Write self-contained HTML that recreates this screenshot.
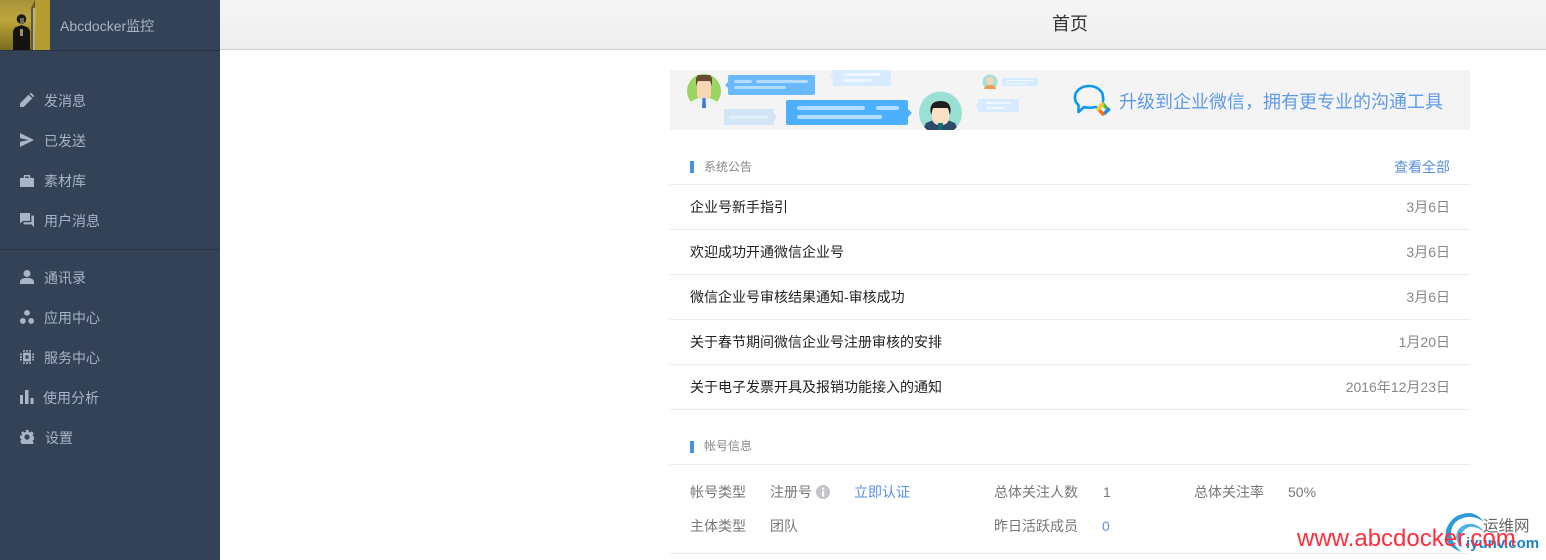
<!DOCTYPE html>
<html lang="zh"><head><meta charset="utf-8"><title>首页</title>
<style>
html,body{margin:0;padding:0;background:#fff}
body{width:1546px;height:560px;overflow:hidden;position:relative;font-family:"Liberation Sans","Noto Sans CJK SC",sans-serif;font-size:14px;color:#777}
.a{position:absolute;white-space:nowrap;line-height:20px}
.side{position:absolute;left:0;top:0;width:220px;height:560px;background:#344257}
.hr{position:absolute;left:0;width:220px;height:1px;background:#273242}
.m{position:absolute;white-space:nowrap;line-height:20px;color:#a6b4c9;left:44px}
.ic{position:absolute;left:20px;width:14px;height:14px;fill:#a9b5c7}
.top{position:absolute;left:220px;top:0;width:1326px;height:49px;background:linear-gradient(#f5f5f5,#eeeeee);border-bottom:1px solid #cfcfcf}
.l{position:absolute;left:670px;width:800px;height:1px;background:#ebebeb}
.t{color:#222}.d{color:#888}.b{color:#5a8fe0}
.bar{position:absolute;left:690px;width:4px;height:12px;background:#4a90e2}
</style></head><body>
<div class="side">
<svg style="position:absolute;left:0;top:0" width="50" height="50" viewBox="0 0 50 50">
<defs><linearGradient id="w" x1="0" y1="0" x2="0" y2="1"><stop offset="0" stop-color="#a8923a"/><stop offset=".4" stop-color="#bda63c"/><stop offset="1" stop-color="#7a6a1e"/></linearGradient></defs>
<rect width="50" height="50" fill="url(#w)"/>
<path d="M31 8 35 0V50H31z" fill="#6a5a20"/><rect x="33" y="8" width="2.500" height="42" fill="#b5ae8e"/>
<rect x="36" y="0" width="14" height="50" fill="#b59c30"/>
<circle cx="21.500" cy="19" r="4.800" fill="#1b1a14"/><rect x="20" y="18" width="4" height="6" fill="#6f6a55"/>
<path d="M13 50V31L15 27.500 21.500 25 28 27.500 30 31V50z" fill="#14130f"/><rect x="20" y="29" width="3" height="7" fill="#9c8f6a"/>
</svg>
<div class="a" style="left:60px;top:16px;color:#a6b4c9">Abcdocker监控</div>
<div class="hr" style="top:50px"></div>
<div class="hr" style="top:249px"></div>

<svg class="ic" style="top:93px" viewBox="0 0 16 16"><path d="M0 16v-4.200L9.800 2l4.200 4.200L4.200 16zM11 .8 12 0q.5-.3 1 0l3 3q.3.500 0 1l-1 1z"/></svg>
<div class="m" style="top:91px">发消息</div>
<svg class="ic" style="top:133px" viewBox="0 0 16 16"><path d="M0 0 16 8 0 16V10L10 8 0 6z"/></svg>
<div class="m" style="top:131px">已发送</div>
<svg class="ic" style="top:175px;height:12px" viewBox="0 0 14 12"><path fill-rule="evenodd" d="M0 3H3.500L4 0H10L10.500 3H14V12H0zM5.200 3H8.800V1.500H5.200z"/></svg>
<div class="m" style="top:171px">素材库</div>
<svg class="ic" style="top:213px" viewBox="0 0 16 16"><path d="M0 0H11.500V9H3.500L0 12zM13 3H16V16L13 13H4V10.500H13z"/></svg>
<div class="m" style="top:211px">用户消息</div>

<svg class="ic" style="top:270px" viewBox="0 0 16 16"><circle cx="8" cy="4" r="4"/><path d="M0 16v-3q1-4 8-4t8 4v3z"/></svg>
<div class="m" style="top:268px;left:44px">通讯录</div>
<svg class="ic" style="top:310px" viewBox="0 0 16 16"><circle cx="8" cy="3.300" r="3.300"/><circle cx="3.300" cy="12.500" r="3.300"/><circle cx="12.700" cy="12.500" r="3.300"/></svg>
<div class="m" style="top:308px">应用中心</div>
<svg class="ic" style="top:350px" viewBox="0 0 16 16"><path d="M3.500 3H12.500V13H3.500zM6.200 6V10H9.800V6zM3.500 0h2v2h-2zM7 0h2v2H7zM10.500 0h2v2h-2zM3.500 14h2v2h-2zM7 14h2v2H7zM10.500 14h2v2h-2zM0 4h2v2H0zM0 7h2v2H0zM0 10h2v2H0zM14 4h2v2h-2zM14 7h2v2h-2zM14 10h2v2h-2z" fill-rule="evenodd"/></svg>
<div class="m" style="top:348px">服务中心</div>
<svg class="ic" style="top:390px" viewBox="0 0 14 14"><path d="M0 5H3V14H0zM5 0H8.500V14H5zM10.500 8H13.500V14H10.500z"/></svg>
<div class="m" style="top:388px;left:43px">使用分析</div>
<svg class="ic" style="top:430px" viewBox="0 0 16 16"><path fill-rule="evenodd" d="M6.300 0h3.400l.4 2.300 1.300.6 2-1.300 2.300 2.400-1.300 2 .5 1.200 2.100.4v3.400l-2.100.4-.5 1.200 1.300 2-2.300 2.400-2-1.300-1.300.6-.4 2.300H6.300l-.4-2.300-1.300-.6-2 1.300L.3 13l1.300-2-.5-1.200L-.1 9.400V6.600l2.200-.4.5-1.200-1.300-2L3.600 1.600l2 1.300 1.300-.6zM8 5a3 3 0 1 0 0 6a3 3 0 0 0 0-6z"/></svg>
<div class="m" style="top:428px;left:45px">设置</div>
</div>

<div class="top"></div>
<div class="a" style="left:1052px;top:13px;font-size:18px;line-height:22px;color:#333">首页</div>

<!-- banner -->
<svg style="position:absolute;left:670px;top:70px" width="800" height="60" viewBox="0 0 800 60">
<defs><clipPath id="c1"><rect width="800" height="60"/></clipPath><clipPath id="c2"><circle cx="34" cy="21" r="17"/></clipPath><clipPath id="c3"><circle cx="270.500" cy="43" r="21.500"/></clipPath></defs>
<rect width="800" height="60" fill="#f4f4f5"/>
<circle cx="34" cy="21" r="17" fill="#9dd562"/>
<g clip-path="url(#c2)">
<path d="M18 40V33L28 28H40L50 33V40z" fill="#eef3f4"/>
<rect x="27" y="8" width="14" height="21" rx="5" fill="#fbd6b4"/><path d="M26 16V8L28 5H40L42 8V16L40 11H28z" fill="#6b4a33"/>
<path d="M32.500 28H35.500L36 38H32z" fill="#3a76d8"/>
</g>
<rect x="58" y="5" width="87" height="20" rx="2" fill="#68b9fe"/><path d="M58 12l-3 3 3 3z" fill="#68b9fe"/>
<rect x="64" y="10" width="18" height="3" rx="1.500" fill="#b4dcfe"/><rect x="86" y="10" width="52" height="3" rx="1.500" fill="#b4dcfe"/><rect x="64" y="16" width="52" height="3" rx="1.500" fill="#b4dcfe"/>
<rect x="163" y="0" width="58" height="16" fill="#d6ebff"/><path d="M163 2l-3 3 3 3z" fill="#d6ebff"/>
<rect x="174" y="3" width="36" height="3" rx="1.500" fill="#eef7ff"/><rect x="174" y="9" width="28" height="3" rx="1.500" fill="#eef7ff"/>
<rect x="54" y="39" width="50" height="16" fill="#d3e6f7"/><path d="M104 43l2.500 4-2.500 4z" fill="#d3e6f7"/>
<rect x="59" y="46" width="39" height="2.500" rx="1.200" fill="#e6f1fb"/>
<rect x="116" y="30" width="122" height="25" rx="2" fill="#4db0ff"/><path d="M238 39l4 4-4 4z" fill="#4db0ff"/>
<rect x="127" y="36" width="68" height="4" rx="2" fill="#b4dcfe"/><rect x="206" y="36" width="23" height="4" rx="2" fill="#b4dcfe"/><rect x="127" y="45" width="85" height="4" rx="2" fill="#b4dcfe"/>
<g clip-path="url(#c1)"><circle cx="270.500" cy="43" r="21.500" fill="#9be0d5"/>
<g clip-path="url(#c3)">
<path d="M252 62L256 53 266 49H275L285 53 289 62z" fill="#2c4a6b"/>
<rect x="262" y="36" width="17" height="19" rx="7" fill="#fce0c4"/><path d="M261 45Q258 31 270.500 31Q283 31 280 45L278 38H263z" fill="#1d1d1d"/>
<path d="M268 53H273L272 62H269z" fill="#0e6d7d"/>
</g></g>
<circle cx="320" cy="12" r="7.500" fill="#a4e2d8"/><rect x="316.500" y="7" width="7" height="8" rx="3" fill="#f4d7b9"/><path d="M314 19q1-4 6-4t6 4z" fill="#ee9a52"/>
<rect x="332" y="8" width="36" height="8" fill="#d6ebff"/><rect x="336" y="10" width="28" height="1.200" fill="#eef7ff"/><rect x="336" y="13" width="20" height="1.200" fill="#eef7ff"/>
<rect x="308" y="29" width="41" height="13" fill="#d6ebff"/><path d="M308 33l-3 3 3 3z" fill="#d6ebff"/><rect x="316" y="32" width="25" height="2" rx="1" fill="#eef7ff"/><rect x="316" y="37" width="19" height="2" rx="1" fill="#eef7ff"/>
<path d="M426 37Q419 38.500 414 37L408.500 42V35Q404.500 31.500 405 27A14 11 0 0 1 433 27Q433.500 29 433 31" fill="none" stroke="#0a96f5" stroke-width="2.600" stroke-linejoin="round" stroke-linecap="round"/>
<path d="M433 34L437.500 39" stroke="#5cbb3f" stroke-width="3.500" stroke-linecap="round"/>
<path d="M438.500 39.500L435 43" stroke="#1a8df0" stroke-width="3.500" stroke-linecap="round"/>
<path d="M433 44L430 41" stroke="#f0741a" stroke-width="3.500" stroke-linecap="round"/>
<path d="M428 39L432 34.500" stroke="#fac92f" stroke-width="3.800" stroke-linecap="round"/>
</svg>
<div class="a" style="left:1119px;top:90px;font-size:18px;line-height:24px;color:#5f9ae6">升级到企业微信，拥有更专业的沟通工具</div>

<div class="bar" style="top:161px"></div>
<div class="a" style="left:704px;top:157px;font-size:12px;color:#888">系统公告</div>
<div class="a b" style="right:96px;top:157px">查看全部</div>
<div class="l" style="top:184px"></div>

<div class="a t" style="left:690px;top:197px">企业号新手指引</div><div class="a d" style="right:96px;top:197px">3月6日</div>
<div class="l" style="top:229px"></div>
<div class="a t" style="left:690px;top:242px">欢迎成功开通微信企业号</div><div class="a d" style="right:96px;top:242px">3月6日</div>
<div class="l" style="top:274px"></div>
<div class="a t" style="left:690px;top:287px">微信企业号审核结果通知-审核成功</div><div class="a d" style="right:96px;top:287px">3月6日</div>
<div class="l" style="top:319px"></div>
<div class="a t" style="left:690px;top:332px">关于春节期间微信企业号注册审核的安排</div><div class="a d" style="right:96px;top:332px">1月20日</div>
<div class="l" style="top:364px"></div>
<div class="a t" style="left:690px;top:377px">关于电子发票开具及报销功能接入的通知</div><div class="a d" style="right:96px;top:377px">2016年12月23日</div>
<div class="l" style="top:409px"></div>

<div class="bar" style="top:441px"></div>
<div class="a" style="left:704px;top:436px;font-size:12px;color:#888">帐号信息</div>
<div class="l" style="top:464px"></div>

<div class="a" style="left:690px;top:482px">帐号类型</div>
<div class="a" style="left:770px;top:482px">注册号</div>
<svg style="position:absolute;left:816px;top:485px" width="14" height="14" viewBox="0 0 14 14"><circle cx="7" cy="7" r="7" fill="#c3c5c9"/><rect x="6" y="6" width="2.200" height="5.500" fill="#fff"/><rect x="6" y="2.800" width="2.200" height="2" fill="#fff"/></svg>
<div class="a b" style="left:854px;top:482px">立即认证</div>
<div class="a" style="left:994px;top:482px">总体关注人数</div>
<div class="a" style="left:1103px;top:482px">1</div>
<div class="a" style="left:1194px;top:482px">总体关注率</div>
<div class="a" style="left:1288px;top:482px">50%</div>
<div class="a" style="left:690px;top:516px">主体类型</div>
<div class="a" style="left:770px;top:516px">团队</div>
<div class="a" style="left:994px;top:516px">昨日活跃成员</div>
<div class="a b" style="left:1102px;top:516px">0</div>
<div class="l" style="top:553px"></div>

<!-- watermark -->
<svg style="position:absolute;left:1440px;top:510px" width="60" height="50" viewBox="0 0 60 50">
<path d="M22 42Q3 36 6 20Q12 3 30 3Q38 4 44 12Q36 6 27 7Q11 10 11 24Q13 36 22 42z" fill="#2d9bd8"/>
<path d="M22 38Q13 30 18 20Q26 11 36 15Q41 17 44 22Q37 16 29 17Q20 21 21 30z" fill="#4fb2e4"/>
</svg>
<div class="a" style="left:1483px;top:517px;font-size:15.500px;line-height:20px;color:#666">运维网</div>
<div class="a" style="left:1466px;top:535px;font-size:15px;line-height:18px;font-weight:bold;color:#1c82c6">iyunv.com</div>
<div class="a" style="left:1297px;top:524px;font-size:24px;line-height:30px;color:#ff2d3d">www.abcdocker.com</div>
</body></html>
